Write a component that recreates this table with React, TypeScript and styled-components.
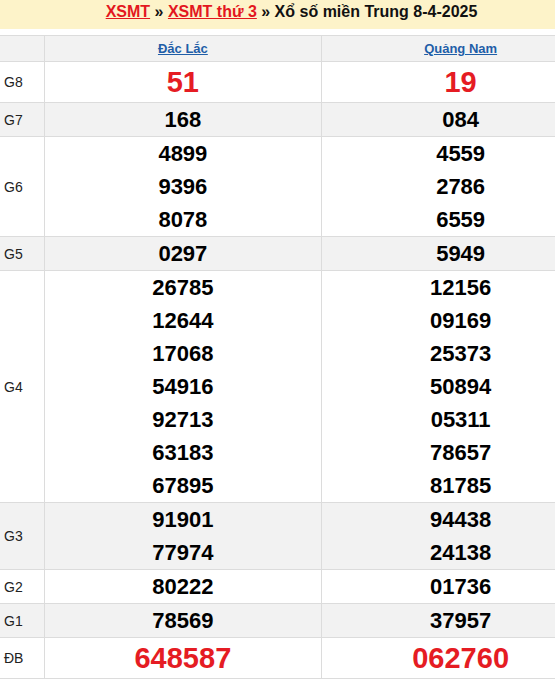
import React from 'react';
import styled, { createGlobalStyle } from 'styled-components';

const GlobalStyle = createGlobalStyle`
    body {
        margin: 0;
        background: #fff;
        font-family: Arial, 'Liberation Sans', sans-serif;
    }
`;

const Viewport = styled.div`
    width: 555px;
    overflow: hidden;
`;

const Page = styled.div`
    width: 600px;
`;

const TitleBar = styled.h2`
    margin: 0 0 6px;
    height: 29px;
    padding: 0 17px 0 0;
    box-sizing: border-box;
    background: #fdf3c9;
    text-align: center;
    font-size: 16px;
    line-height: 23px;
    font-weight: bold;
    color: #111;

    a {
        color: #e3171e;
        text-decoration: underline;
    }
`;

const Table = styled.table`
    width: 600px;
    border-collapse: collapse;
    table-layout: fixed;
`;

const Row = styled.tr<{ $shade?: boolean }>`
    background: ${({ $shade }) => ($shade ? '#f2f2f2' : '#fff')};
`;

const LabelCell = styled.td`
    width: 44px;
    padding: 0 0 0 4px;
    box-sizing: border-box;
    border: 1px solid #dcdcdc;
    border-left: none;
    font-size: 14px;
    color: #222;
    vertical-align: middle;
`;

const HeadCell = styled.th<{ $corner?: boolean }>`
    height: 25px;
    padding: 0;
    border: 1px solid #dcdcdc;
    ${({ $corner }) => ($corner ? 'border-left: none;' : '')}
    font-size: 13px;
    font-weight: bold;
    text-align: center;

    a {
        color: #1f5ea8;
        text-decoration: underline;
    }
`;

const NumCell = styled.td<{ $big?: boolean }>`
    padding: 0;
    border: 1px solid #dcdcdc;
    text-align: center;
    vertical-align: middle;
    font-weight: bold;
    font-size: ${({ $big }) => ($big ? '29px' : '22px')};
    line-height: ${({ $big }) => ($big ? '40px' : '33px')};
    color: ${({ $big }) => ($big ? '#e51c23' : '#000')};
`;

const Num = styled.div``;

type Prize = { label: string; a: string[]; b: string[]; big?: boolean };

const prizes: Prize[] = [
    { label: 'G8', a: ['51'], b: ['19'], big: true },
    { label: 'G7', a: ['168'], b: ['084'] },
    { label: 'G6', a: ['4899', '9396', '8078'], b: ['4559', '2786', '6559'] },
    { label: 'G5', a: ['0297'], b: ['5949'] },
    {
        label: 'G4',
        a: ['26785', '12644', '17068', '54916', '92713', '63183', '67895'],
        b: ['12156', '09169', '25373', '50894', '05311', '78657', '81785'],
    },
    { label: 'G3', a: ['91901', '77974'], b: ['94438', '24138'] },
    { label: 'G2', a: ['80222'], b: ['01736'] },
    { label: 'G1', a: ['78569'], b: ['37957'] },
    { label: 'ĐB', a: ['648587'], b: ['062760'], big: true },
];

const App: React.FC = () => {
    return (
        <>
            <GlobalStyle />
            <Viewport>
                <Page>
                    <TitleBar>
                        <a href="#">XSMT</a> » <a href="#">XSMT thứ 3</a> » Xổ số miền Trung 8-4-2025
                    </TitleBar>
                    <Table>
                        <colgroup>
                            <col style={{ width: 44 }} />
                            <col />
                            <col />
                        </colgroup>
                        <thead>
                            <Row $shade>
                                <HeadCell $corner />
                                <HeadCell>
                                    <a href="#">Đắc Lắc</a>
                                </HeadCell>
                                <HeadCell>
                                    <a href="#">Quảng Nam</a>
                                </HeadCell>
                            </Row>
                        </thead>
                        <tbody>
                            {prizes.map((p, i) => (
                                <Row key={p.label} $shade={i % 2 === 1}>
                                    <LabelCell>{p.label}</LabelCell>
                                    <NumCell $big={p.big}>
                                        {p.a.map(n => (
                                            <Num key={n}>{n}</Num>
                                        ))}
                                    </NumCell>
                                    <NumCell $big={p.big}>
                                        {p.b.map(n => (
                                            <Num key={n}>{n}</Num>
                                        ))}
                                    </NumCell>
                                </Row>
                            ))}
                        </tbody>
                    </Table>
                </Page>
            </Viewport>
        </>
    );
};

export default App;
